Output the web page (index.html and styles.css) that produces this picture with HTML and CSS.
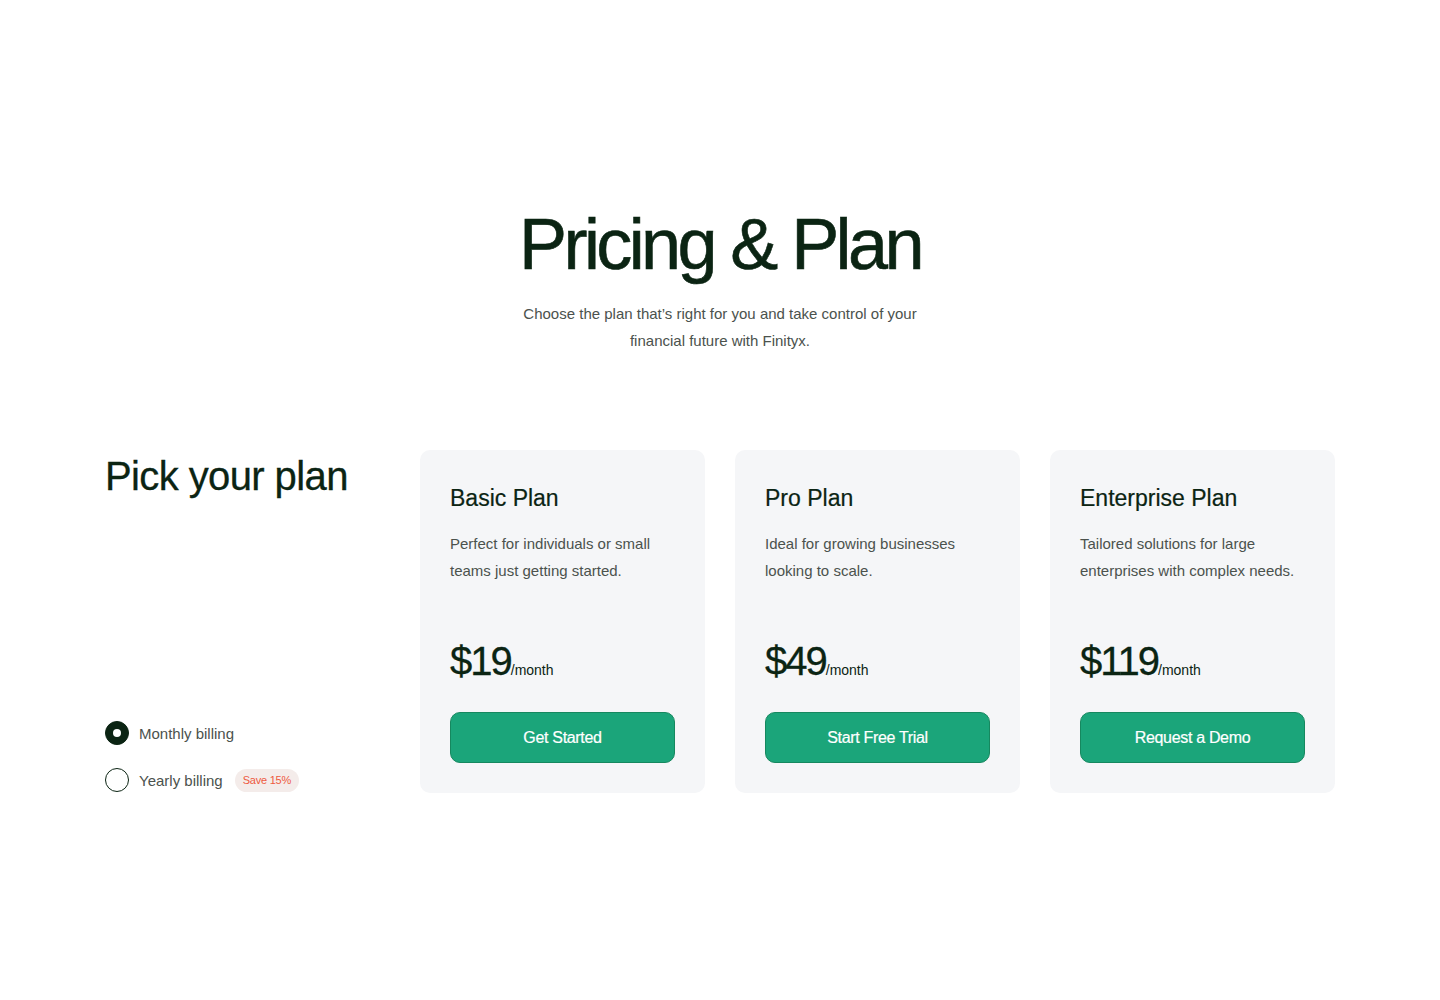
FILE: index.html
```html
<!DOCTYPE html>
<html>
<head>
<meta charset="utf-8">
<title>Pricing &amp; Plan</title>
<link rel="stylesheet" href="styles.css">
</head>
<body>
	<header class="intro">
		<h1>Pricing &amp; Plan</h1>
		<p>Choose the plan that’s right for you and take control of your<br>financial future with Finityx.</p>
	</header>

	<section class="plans">
		<div class="picker">
			<h2>Pick your plan</h2>
			<div class="billing">
				<label class="option">
					<span class="radio checked"></span>
					<span>Monthly billing</span>
				</label>
				<label class="option">
					<span class="radio"></span>
					<span>Yearly billing</span>
					<span class="badge">Save 15%</span>
				</label>
			</div>
		</div>

		<div class="card">
			<h3>Basic Plan</h3>
			<p class="desc">Perfect for individuals or small teams just getting started.</p>
			<div class="price">$19<span>/month</span></div>
			<button class="btn">Get Started</button>
		</div>

		<div class="card">
			<h3>Pro Plan</h3>
			<p class="desc">Ideal for growing businesses looking to scale.</p>
			<div class="price">$49<span>/month</span></div>
			<button class="btn">Start Free Trial</button>
		</div>

		<div class="card">
			<h3>Enterprise Plan</h3>
			<p class="desc">Tailored solutions for large enterprises with complex needs.</p>
			<div class="price">$119<span>/month</span></div>
			<button class="btn">Request a Demo</button>
		</div>
	</section>
</body>
</html>
```

FILE: styles.css
```css
* {
	margin: 0;
	padding: 0;
	box-sizing: border-box;
}

body {
	font-family: "Liberation Sans", Arial, sans-serif;
	background: #fff;
	color: #0b2413;
}

.intro {
	padding-top: 208px;
	text-align: center;
}

.intro h1 {
	font-size: 72px;
	line-height: 72px;
	font-weight: 400;
	letter-spacing: -0.05em;
	-webkit-text-stroke: 0.6px #0b2413;
}

.intro p {
	margin-top: 20px;
	font-size: 15px;
	line-height: 27px;
	color: #4b524d;
}

.plans {
	display: grid;
	grid-template-columns: repeat(4, 285px);
	gap: 30px;
	justify-content: center;
	margin-top: 96px;
}

.picker {
	display: flex;
	flex-direction: column;
	justify-content: space-between;
	padding-bottom: 1px;
}

.picker h2 {
	font-size: 40px;
	line-height: 52px;
	font-weight: 400;
	letter-spacing: -0.015em;
	-webkit-text-stroke: 0.3px #0b2413;
}

.billing {
	display: flex;
	flex-direction: column;
	gap: 23px;
}

.option {
	display: flex;
	align-items: center;
	gap: 10px;
	font-size: 15px;
	color: #4b524d;
	height: 24px;
}

.radio {
	width: 24px;
	height: 24px;
	border-radius: 50%;
	border: 1.5px solid #0b2413;
	display: flex;
	align-items: center;
	justify-content: center;
}

.radio.checked {
	background: #0b2413;
}

.radio.checked::after {
	content: "";
	width: 8px;
	height: 8px;
	border-radius: 50%;
	background: #fff;
}

.badge {
	margin-left: 2px;
	background: #f4ecea;
	color: #ee5a3f;
	font-size: 11px;
	line-height: 23px;
	padding: 0 8px;
	border-radius: 12px;
	letter-spacing: -0.02em;
}

.card {
	background: #f5f6f8;
	border-radius: 10px;
	padding: 30px;
	display: flex;
	flex-direction: column;
}

.card h3 {
	font-size: 23px;
	line-height: 36px;
	font-weight: 400;
	-webkit-text-stroke: 0.2px #0b2413;
}

.desc {
	margin-top: 14px;
	font-size: 15px;
	line-height: 27px;
	color: #4b524d;
}

.price {
	margin-top: 53px;
	font-size: 40px;
	line-height: 48px;
	font-weight: 400;
	letter-spacing: -0.05em;
	-webkit-text-stroke: 0.3px #0b2413;
}

.price span {
	font-size: 14px;
	line-height: 1;
	letter-spacing: 0;
	-webkit-text-stroke: 0;
}

.btn {
	display: block;
	width: 100%;
	height: 51px;
	margin-top: 27px;
	background: #1ba57a;
	border: 1px solid #16885f;
	border-radius: 10px;
	color: #fff;
	font-family: inherit;
	font-size: 16px;
	letter-spacing: -0.02em;
	-webkit-text-stroke: 0.2px #fff;
	cursor: pointer;
}
```
